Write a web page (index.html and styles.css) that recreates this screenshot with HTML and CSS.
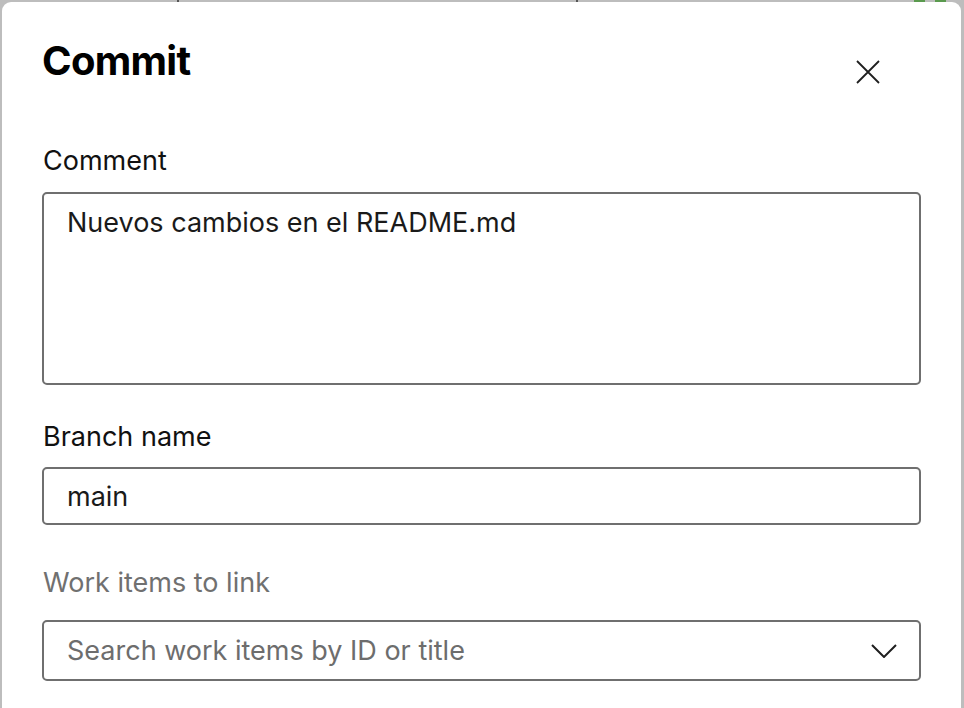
FILE: index.html
```html
<!DOCTYPE html>
<html lang="en">
<head>
  <meta charset="UTF-8">
  <title>Commit</title>
  <link rel="stylesheet" href="styles.css">
</head>
<body>
  <div class="backdrop">
    <span class="tick tick-a"></span>
    <span class="tick tick-b"></span>
    <span class="dot dot-a"></span>
    <span class="dot dot-b"></span>
  </div>

  <div class="panel">
    <div class="panel-header">
      <h1 class="panel-title">Commit</h1>
      <button class="close-btn" aria-label="Close">
        <svg width="24" height="24" viewBox="0 0 24 24">
          <path d="M1 1 L23 23 M23 1 L1 23" stroke="#1f1f1f" stroke-width="1.8" fill="none"/>
        </svg>
      </button>
    </div>

    <div class="field field-comment">
      <label class="field-label">Comment</label>
      <div class="text-box text-area">Nuevos cambios en el README.md</div>
    </div>

    <div class="field field-branch">
      <label class="field-label">Branch name</label>
      <div class="text-box">main</div>
    </div>

    <div class="field field-work">
      <label class="field-label muted">Work items to link</label>
      <div class="text-box dropdown">
        <span class="placeholder">Search work items by ID or title</span>
        <svg class="chevron" width="26" height="14" viewBox="0 0 26 14">
          <path d="M1 1 L13 13 L25 1" stroke="#1f1f1f" stroke-width="2" fill="none"/>
        </svg>
      </div>
    </div>
  </div>
</body>
</html>
```

FILE: styles.css
```css
html, body {
  margin: 0;
  height: 100%;
}

body {
  font-family: Inter, "Noto Sans", sans-serif;
  background: #bdbdbd;
  color: #1e1e1e;
  padding: 2px 3px 0 2px;
  box-sizing: border-box;
  overflow: hidden;
  position: relative;
}

/* bits of the page behind the overlay */
.backdrop .tick {
  position: absolute;
  top: 0;
  width: 2px;
  height: 3px;
  background: #555;
}
.tick-a { left: 177px; }
.tick-b { left: 576px; }

.backdrop .dot {
  position: absolute;
  top: 0;
  width: 11px;
  height: 3px;
  background: #5a9a4e;
}
.dot-a { left: 914px; }
.dot-b { left: 935px; }

.panel {
  position: relative;
  background: #fff;
  border-radius: 9px 9px 0 0;
  height: 100%;
  padding: 0 40px;
  box-sizing: border-box;
}

.panel-header {
  display: flex;
  align-items: center;
  justify-content: space-between;
  padding-top: 35px;
}

.panel-title {
  margin: 0;
  font-size: 40px;
  font-weight: 700;
  letter-spacing: -0.7px;
  line-height: 48px;
  color: #000;
}

.close-btn {
  border: none;
  background: none;
  padding: 0;
  margin: 22px 41px 0 0;
  width: 24px;
  height: 24px;
  cursor: pointer;
}

.field {
  display: flex;
  flex-direction: column;
}

.field-label {
  font-size: 27px;
  line-height: 36px;
  margin-left: 1px;
  color: #111;
}

.field-comment .field-label { margin-top: 58px; margin-bottom: 13px; }
.field-branch .field-label { margin-top: 34px; margin-bottom: 12px; }
.field-work .field-label { margin-top: 40px; margin-bottom: 19px; }

.field-label.muted {
  color: #707070;
}

.text-box {
  border: 2px solid #6f6f6f;
  border-radius: 5px;
  height: 58px;
  box-sizing: border-box;
  padding: 0 23px;
  font-size: 27px;
  display: flex;
  align-items: center;
  color: #1a1a1a;
}

.text-area {
  height: 193px;
  align-items: flex-start;
  padding-top: 12px;
}

.dropdown {
  height: 61px;
  justify-content: space-between;
  padding-right: 22px;
}

.placeholder {
  color: #6d6d6d;
}
```
